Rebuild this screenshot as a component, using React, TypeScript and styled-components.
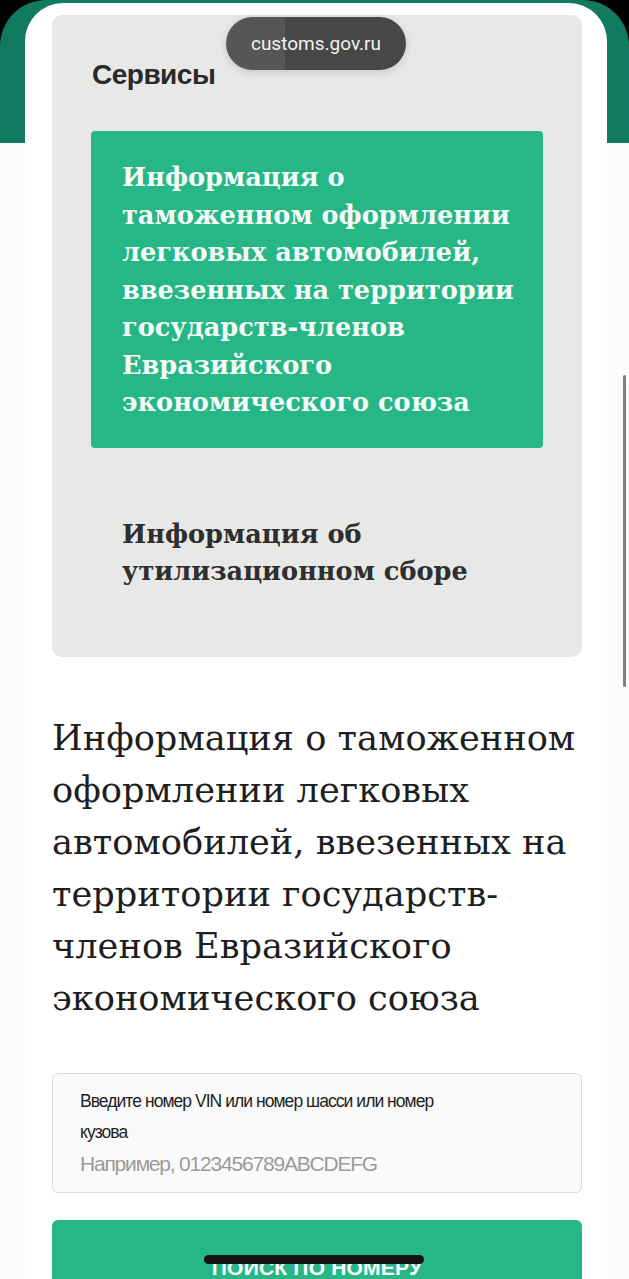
import React from "react"
import styled, { createGlobalStyle } from "styled-components"

const GlobalStyle = createGlobalStyle`
  html, body {
    margin: 0;
    padding: 0;
    background: #000;
  }
  * {
    box-sizing: border-box;
  }
`

const Screen = styled.div`
  position: relative;
  width: 629px;
  height: 1279px;
  overflow: hidden;
  border-radius: 46px 46px 0 0;
  background: linear-gradient(to bottom, #127a5f 0, #117a5e 143px, #fbfbfb 143px);
  padding-top: 3px;
`

const Sheet = styled.div`
  margin: 0 22px 0 25px;
  min-height: 1300px;
  background: #fff;
  border-radius: 38px 38px 0 0;
  padding: 12px 25px 0 27px;
`

const ServicesCard = styled.section`
  background: #e8e9e6;
  border-radius: 10px;
  padding: 42px 39px 40px;
`

const CardTitle = styled.h3`
  margin: 0 0 38px 1px;
  font-family: "Liberation Sans", Arial, sans-serif;
  font-weight: 700;
  font-size: 28px;
  line-height: 36px;
  color: #2a2a2a;
  letter-spacing: -0.5px;
`

const ServiceItem = styled.div<{ $active?: boolean }>`
  padding: 28px 10px 26px 31px;
  border-radius: 4px;
  background: ${(p) => (p.$active ? "#27b686" : "transparent")};
  color: ${(p) => (p.$active ? "#f4fbf7" : "#2e2e2e")};
  font-family: "DejaVu Serif", "Liberation Serif", serif;
  font-weight: 700;
  font-size: 25.6px;
  line-height: 37.5px;
  white-space: nowrap;

  & + & {
    margin-top: 40px;
  }
`

const Heading = styled.h1`
  margin: 55px 0 49px;
  font-family: "DejaVu Serif", "Liberation Serif", serif;
  font-weight: 400;
  font-size: 35.2px;
  line-height: 52px;
  color: #1e1e1e;
  white-space: nowrap;
`

const InputBox = styled.div`
  height: 120px;
  border: 1px solid #dcdcdc;
  border-radius: 6px;
  background: #fafafa;
  padding: 12px 20px 0 27px;
`

const InputLabel = styled.div`
  font-family: "Liberation Sans", Arial, sans-serif;
  font-size: 17.5px;
  line-height: 31px;
  color: #1f1f1f;
  letter-spacing: -0.95px;
`

const Placeholder = styled.div`
  margin-top: 3px;
  font-family: "Liberation Sans", Arial, sans-serif;
  font-size: 21px;
  line-height: 26px;
  color: #9a9a9a;
  letter-spacing: -1.2px;
`

const SearchButton = styled.button`
  display: flex;
  justify-content: center;
  width: 100%;
  height: 100px;
  margin-top: 27px;
  padding-top: 36px;
  border: none;
  border-radius: 6px;
  background: #27b686;
  color: #fff;
  font-family: "Liberation Sans", Arial, sans-serif;
  font-weight: 700;
  font-size: 21px;
  letter-spacing: 0.2px;
`

const UrlPill = styled.div`
  position: absolute;
  top: 17px;
  left: 226px;
  width: 180px;
  height: 53px;
  border-radius: 27px;
  background: linear-gradient(to right, #565656 0, #565656 33%, #474747 33%);
  box-shadow: 0 2px 8px rgba(0, 0, 0, 0.15);
  display: flex;
  align-items: center;
  justify-content: center;
  font-family: Roboto, "Liberation Sans", sans-serif;
  font-size: 19px;
  color: #f2f2f2;
`

const HomeIndicator = styled.div`
  position: absolute;
  left: 204px;
  top: 1255px;
  width: 220px;
  height: 9px;
  border-radius: 5px;
  background: #141414;
`

const ScrollThumb = styled.div`
  position: absolute;
  right: 3px;
  top: 375px;
  width: 3px;
  height: 312px;
  border-radius: 2px;
  background: #808080;
`

export default function App() {
  return (
    <>
      <GlobalStyle />
      <Screen>
        <Sheet>
          <ServicesCard>
            <CardTitle>Сервисы</CardTitle>
            <ServiceItem $active>
              Информация о<br />
              таможенном оформлении<br />
              легковых автомобилей,<br />
              ввезенных на территории<br />
              государств-членов<br />
              Евразийского<br />
              экономического союза
            </ServiceItem>
            <ServiceItem>
              Информация об<br />
              утилизационном сборе
            </ServiceItem>
          </ServicesCard>
          <Heading>
            Информация о таможенном<br />
            оформлении легковых<br />
            автомобилей, ввезенных на<br />
            территории государств-<br />
            членов Евразийского<br />
            экономического союза
          </Heading>
          <InputBox>
            <InputLabel>
              Введите номер VIN или номер шасси или номер<br />
              кузова
            </InputLabel>
            <Placeholder>Например, 0123456789ABCDEFG</Placeholder>
          </InputBox>
          <SearchButton>ПОИСК ПО НОМЕРУ</SearchButton>
        </Sheet>
        <UrlPill>customs.gov.ru</UrlPill>
        <ScrollThumb />
        <HomeIndicator />
      </Screen>
    </>
  )
}
